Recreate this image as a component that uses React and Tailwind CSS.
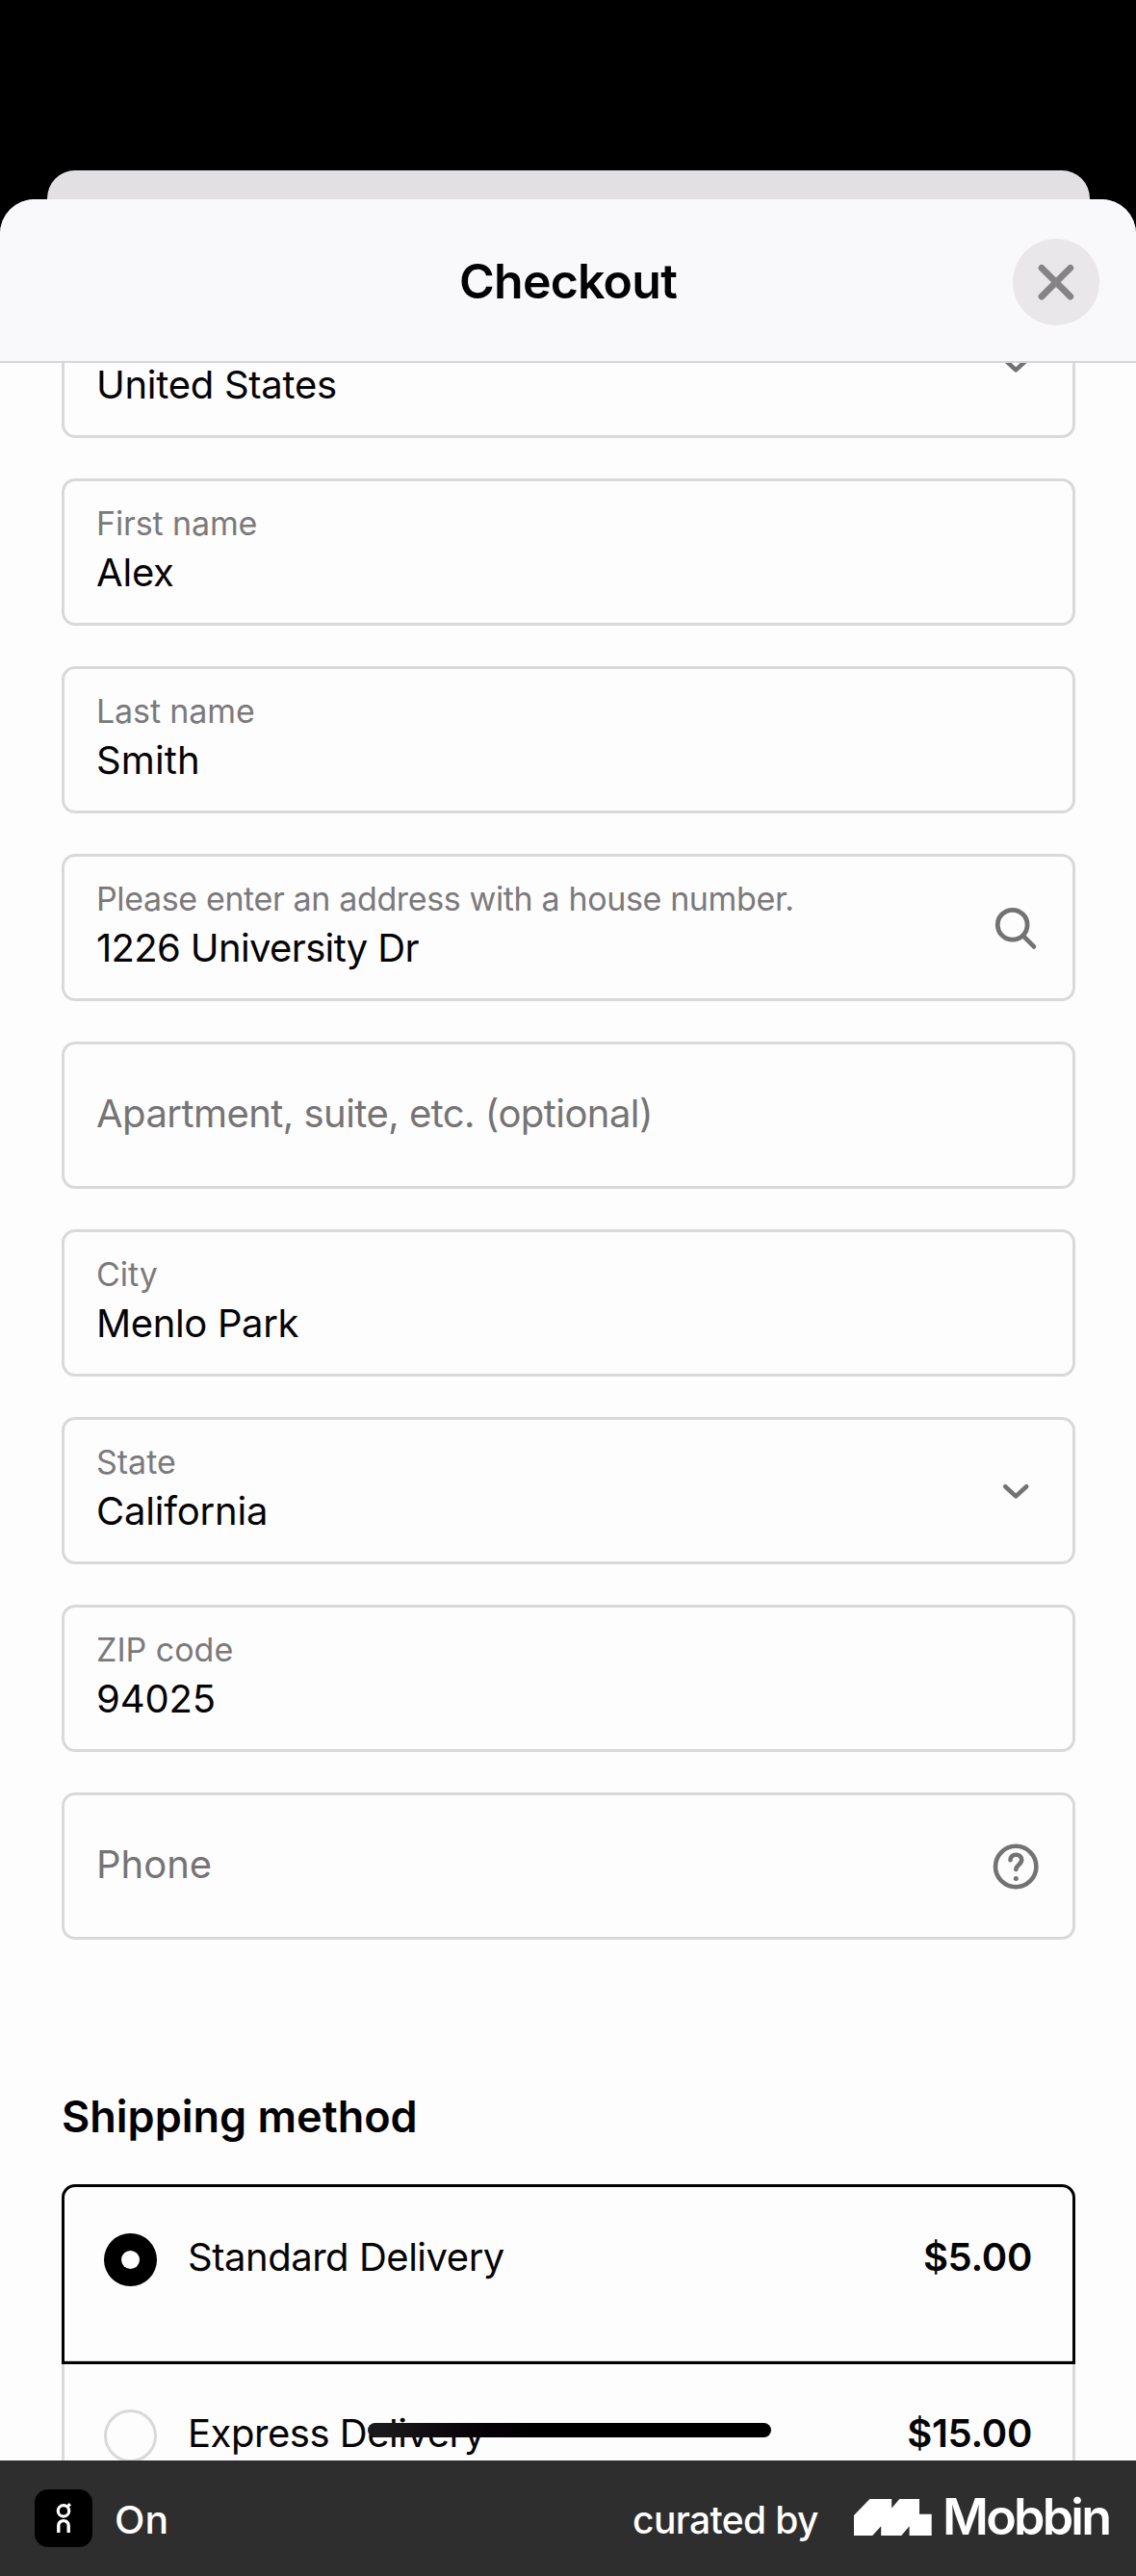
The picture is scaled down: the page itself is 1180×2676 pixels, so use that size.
import React from "react";

function ChevronIcon() {
  return (
    <svg className="h-[48px] w-[48px]" viewBox="0 0 48 48" fill="none" stroke="#747374" strokeWidth="4.6" strokeLinecap="round" strokeLinejoin="round">
      <path d="M13.2 19.2 24.2 29.4 35.2 19.2" />
    </svg>
  );
}

function SearchIcon() {
  return (
    <svg className="h-[48px] w-[48px]" viewBox="0 0 48 48" fill="none" stroke="#747374" strokeWidth="4.8" strokeLinecap="round">
      <circle cx="20.7" cy="20.7" r="15.4" />
      <path d="M32 32.4 43 43.4" />
    </svg>
  );
}

function HelpIcon() {
  return (
    <svg className="h-[48px] w-[48px]" viewBox="0 0 48 48" fill="none" stroke="#747374" strokeWidth="4.6" strokeLinecap="round" strokeLinejoin="round">
      <circle cx="24.2" cy="24" r="21.2" />
      <path d="M18.5 17.3C18.5 13.9 21 11.7 24.3 11.7C27.7 11.7 30.2 13.9 30.2 17C30.2 22 24.4 22.3 24.3 27" />
      <circle cx="24.3" cy="36.4" r="2.5" fill="#747374" stroke="none" />
    </svg>
  );
}

function CloseIcon() {
  return (
    <svg className="h-[48px] w-[48px]" viewBox="0 0 48 48" fill="none" stroke="#848387" strokeWidth="6.8" strokeLinecap="round">
      <path d="M9 9.4 38.8 39M38.8 9.4 9 39" />
    </svg>
  );
}

function Field({ label, value, placeholder, labelClass = "", valueClass = "", icon, className = "" }) {
  return (
    <div className={`flex h-[153px] shrink-0 items-center justify-between rounded-[14px] border-[3px] border-[#dad9da] pl-[33px] pr-[35px] ${className}`}>
      {placeholder ? (
        <span className={`pb-[3px] text-[40px] leading-[48px] whitespace-nowrap text-[#757475] ${valueClass}`}>{placeholder}</span>
      ) : (
        <div className="flex flex-col gap-[7px] self-start pt-[24px] whitespace-nowrap">
          <span className={`text-[34px] leading-[40px] text-[#7b7a7b] ${labelClass}`}>{label}</span>
          <span className={`text-[40px] leading-[48px] text-[#050405] ${valueClass}`}>{value}</span>
        </div>
      )}
      {icon}
    </div>
  );
}

function Option({ name, price, selected, nameClass = "", className = "" }) {
  return (
    <div className={`flex h-[187px] shrink-0 items-start border-[3px] pt-[48px] pr-[42px] pl-[41px] text-[40px] leading-[48px] text-[#050405] ${className}`}>
      {selected ? (
        <span className="flex h-[55px] w-[55px] items-center justify-center rounded-full bg-black">
          <span className="h-[19px] w-[19px] rounded-full bg-[#fefdfe]" />
        </span>
      ) : (
        <span className="h-[55px] w-[55px] rounded-full border-[3px] border-[#dad9da]" />
      )}
      <span className={`mt-px ml-[32px] flex-1 whitespace-nowrap ${nameClass}`}>{name}</span>
      <span className="mt-px font-semibold tracking-[-0.3px]">{price}</span>
    </div>
  );
}

export default function App() {
  return (
    <div className="flex h-[2676px] w-[1180px] flex-col overflow-hidden bg-[#010001] font-['Inter',sans-serif]">
      <div className="mt-[177px] ml-[49px] h-[30px] w-[1083px] shrink-0 rounded-t-[29px] bg-[#e2e0e3]" />

      <div className="flex min-h-0 flex-1 flex-col overflow-hidden rounded-t-[36px] bg-[#fefdfe]">
        <header className="grid h-[170px] shrink-0 grid-cols-[90px_1fr_90px] items-center border-b-2 border-[#d6d5d7] bg-[#f9f8fb] px-[38px] pt-1">
          <span />
          <h1 className="pb-[3px] text-center text-[50px] leading-[60px] font-semibold tracking-[-0.77px] text-[#020103]">Checkout</h1>
          <button className="flex h-[90px] w-[90px] items-center justify-center rounded-full bg-[#e9e7ea]">
            <CloseIcon />
          </button>
        </header>

        <main className="relative flex min-h-0 flex-1 flex-col overflow-hidden pl-[64px] pr-[63px]">
          {/* Country field, scrolled halfway under the header */}
          <div className="flex h-[78px] shrink-0 items-start justify-between rounded-b-[14px] border-x-[3px] border-b-[3px] border-[#dad9da] pr-[35px] pl-[33px]">
            <span className="text-[40px] leading-[46px] tracking-[-0.27px] whitespace-nowrap text-[#050405]">United States</span>
            <span className="-mt-[22px]">
              <ChevronIcon />
            </span>
          </div>

          <div className="mt-[42px] flex shrink-0 flex-col gap-[42px]">
            <Field label="First name" value="Alex" labelClass="tracking-[-0.12px]" valueClass="tracking-[-0.2px]" />
            <Field label="Last name" value="Smith" labelClass="tracking-[-0.12px]" valueClass="tracking-[0.1px]" />
            <Field
              label="Please enter an address with a house number."
              value="1226 University Dr"
              labelClass="tracking-[-0.37px]"
              valueClass="tracking-[-0.65px]"
              icon={<SearchIcon />}
            />
            <Field placeholder="Apartment, suite, etc. (optional)" valueClass="tracking-[-0.55px]" />
            <Field label="City" value="Menlo Park" valueClass="tracking-[-0.35px]" />
            <Field label="State" value="California" valueClass="tracking-[-0.2px]" icon={<ChevronIcon />} />
            <Field label="ZIP code" value="94025" valueClass="tracking-[-0.1px]" />
            <Field placeholder="Phone" icon={<HelpIcon />} />
          </div>

          <h2 className="mt-[156px] text-[45px] leading-[56px] font-semibold whitespace-nowrap text-[#020103]">Shipping method</h2>

          <div className="mt-[42px] flex shrink-0 flex-col">
            <Option name="Standard Delivery" price="$5.00" selected nameClass="tracking-[-0.47px]" className="z-10 rounded-t-[14px] border-black" />
            <Option name="Express Delivery" price="$15.00" nameClass="tracking-[-0.47px]" className="-mt-1 border-[#dad9da]" />
          </div>

          <div className="absolute bottom-[24px] left-[382px] z-20 h-[15px] w-[419px] rounded-full bg-linear-to-r from-[#1a191b] from-5% to-[#010001] to-40%" />
        </main>
      </div>

      <footer className="flex h-[120px] shrink-0 items-center bg-[#2e2e2e] pl-9 font-medium text-white">
        <svg className="h-[60px] w-[60px]" viewBox="0 0 60 60" fill="none">
          <rect width="60" height="60" rx="14" fill="#000" />
          <circle cx="30" cy="22.4" r="5.7" stroke="#fff" strokeWidth="3.2" />
          <path d="M33.5 18.8 36.8 15.2" stroke="#fff" strokeWidth="3.2" />
          <path d="M24.8 45V37.8C24.8 34.7 27 32.6 30 32.6C33 32.6 35.2 34.7 35.2 37.8V45" stroke="#fff" strokeWidth="3.4" />
        </svg>
        <span className="ml-[23px] origin-left scale-x-105 pt-[3px] text-[39px] leading-[48px]">On</span>
        <div className="mr-[28px] ml-auto flex items-center whitespace-nowrap">
          <span className="mr-[37px] w-[193px] pt-[3px] text-[39px] leading-[48px] tracking-[-0.63px]">curated by</span>
          <svg className="h-[38px] w-[81px] -translate-y-px" viewBox="0 0 81 38" fill="#fff">
            <path d="M0 17 16.5 0H39.2V9.5L47.4 0H68V15.7H80.7V38H57.6V28.3L49.3 38H28.2V28.3L19.2 38H0Z" />
          </svg>
          <span className="ml-[11px] w-[173px] pb-[3px] text-[52px] leading-[60px] font-semibold tracking-[-2.8px]">Mobbin</span>
        </div>
      </footer>
    </div>
  );
}
